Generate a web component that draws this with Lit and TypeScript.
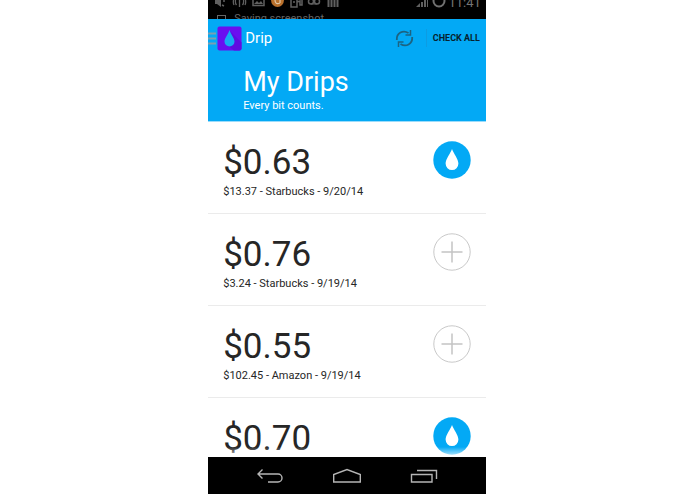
import { LitElement, html, css, svg } from "lit";
import { customElement, property, state } from "lit/decorators.js";

interface Drip {
  amount: string;
  detail: string;
  checked: boolean;
}

const dropPath = "M0 -11C1.6 -6.6 6.4 -0.8 6.4 3.6A6.4 6.4 0 0 1 -6.4 3.6C-6.4 -0.8 -1.6 -6.6 0 -11Z";

@customElement("status-bar")
class StatusBar extends LitElement {
  static styles = css`
    :host {
      display: block;
      flex: none;
      height: 19px;
      overflow: hidden;
      background: #000;
      color: #6a6a6a;
      font-size: 14px;
    }
    .icons {
      display: flex;
      height: 8px;
      align-items: flex-end;
      padding: 0 5px 0 3px;
    }
    svg {
      display: block;
      flex: none;
    }
    .spacer {
      flex: 1;
    }
    .clock {
      line-height: 10px;
      font-size: 13px;
      margin-left: 2px;
      color: #747474;
    }
    .notice {
      display: flex;
      align-items: center;
      gap: 8px;
      padding: 4px 0 0 9px;
      font-size: 11px;
      line-height: 14px;
      color: #666;
    }
    .box {
      width: 9px;
      height: 9px;
      box-sizing: border-box;
      border: 1px solid #666;
    }
  `;

  render() {
    return html`
      <div class="icons">
        <svg width="133" height="8" viewBox="0 0 133 8" fill="none" stroke="#606060" stroke-width="1.5">
          <path d="M4 0V4H6L10 7V0Z" fill="#606060" stroke="none" />
          <path d="M12 1H14M11 5L13 6" />
          <path d="M28.5 0V7M24.500 0Q24 3 25.500 5M32.500 0Q33 3 31.500 5M22.500 0Q22 3 23 5M34.500 0Q35 3 34 5" stroke-width="1.300" />
          <path d="M42 0V5.500H53V0" />
          <path d="M43 4L46 1L48 3L50 1L52 4Z" fill="#606060" stroke="none" />
          <path d="M60 0A6.500 7 0 0 0 73 0Z" fill="#b8702c" stroke="none" />
          <path d="M69 3Q64 5 64 0M69 0V3" stroke="#e0c8a8" stroke-width="1.200" />
          <path d="M80 0V7H86V0M82 2H84M86 2L89 1V5L91 5V0" />
          <path d="M100 4H106" stroke-width="1" />
          <circle cx="100" cy="1.500" r="2.500" />
          <circle cx="106" cy="1.500" r="2.500" />
          <path d="M117.500 0V7M120.500 0V7M123.500 0V7M126.500 0V7" stroke-width="2" />
        </svg>
        <span class="spacer"></span>
        <svg width="31" height="8" viewBox="0 0 31 8">
          <path d="M1 7L5 3V7ZM6 2H8V7H6ZM9 0H11V7H9ZM12 0H13V7H12Z" fill="#606060" />
          <circle cx="24" cy="1" r="5.500" fill="none" stroke="#707070" stroke-width="2" />
        </svg>
        <span class="clock">11:41</span>
      </div>
      <div class="notice"><span class="box"></span><span>Saving screenshot</span></div>
    `;
  }
}

@customElement("drip-header")
class DripHeader extends LitElement {
  static styles = css`
    :host {
      display: block;
      flex: none;
      background: #03a9f5;
      border-bottom: 1px solid #9bdcfb;
      color: #fff;
    }
    .toolbar {
      display: flex;
      align-items: center;
      height: 38px;
      padding-right: 6px;
    }
    button {
      border: 0;
      padding: 0;
      background: none;
      font: inherit;
      color: inherit;
      cursor: pointer;
    }
    svg {
      display: block;
    }
    .home {
      display: flex;
      align-items: center;
      font-size: 15px;
      line-height: 20px;
    }
    .logo {
      margin-right: 3px;
    }
    .spacer {
      flex: 1;
    }
    .rule {
      width: 1px;
      height: 18px;
      margin: 0 6px 0 12px;
      background: #0d9ce2;
    }
    .check-all {
      color: #06222f;
      font-size: 9px;
      line-height: 20px;
      font-weight: 700;
    }
    .heading {
      padding: 9px 35px 7px;
    }
    h1 {
      margin: 0;
      font-size: 27px;
      line-height: 32px;
      font-weight: 400;
    }
    p {
      margin: 0;
      font-size: 11px;
      line-height: 16px;
    }
  `;

  render() {
    return html`
      <div class="toolbar">
        <button class="home" aria-label="Open menu">
          <svg width="9" height="13" viewBox="0 0 9 13"><path d="M0 1.500H8M0 6.500H8M0 11.500H8" stroke="#7d9fb0" stroke-width="2" /></svg>
          <svg class="logo" width="25" height="25" viewBox="0 0 25 25">
            <rect x="0.500" y="0.500" width="24" height="24" rx="2" fill="#6a0ff0" />
            <path d="M13 5L24.500 16.500V22.500Q24.500 24.500 22.500 24.500H17L10 19Z" fill="#600be0" />
            <path d="M12.500 4C13.600 8 17.500 12 17.500 15.500A5 5 0 0 1 7.500 15.500C7.500 12 11.400 8 12.500 4Z" fill="#18a8f5" />
          </svg>
          <span>Drip</span>
        </button>
        <span class="spacer"></span>
        <button aria-label="Refresh">
          <svg width="19" height="19" viewBox="0 0 19 19" fill="none" stroke="#1c6382" stroke-width="1.800">
            <path d="M1.800 11C1.300 4 8 0.500 13.500 4M17.200 8C17.700 15 11 18.500 5.500 15" />
            <path d="M15.500 1V6H10.500M3.500 18V13H8.500" stroke-width="1.500" />
          </svg>
        </button>
        <span class="rule"></span>
        <button class="check-all">CHECK ALL</button>
      </div>
      <div class="heading">
        <h1>My Drips</h1>
        <p>Every bit counts.</p>
      </div>
    `;
  }
}

@customElement("drip-row")
class DripRow extends LitElement {
  @property({ attribute: false }) drip!: Drip;

  static styles = css`
    :host {
      display: flex;
      align-items: flex-start;
      justify-content: space-between;
      box-sizing: border-box;
      height: 92px;
      padding: 19px 15px 0;
      border-bottom: 1px solid #ebebeb;
      color: #262626;
    }
    .amount {
      font-size: 35px;
      line-height: 44px;
    }
    .detail {
      font-size: 11px;
      line-height: 14px;
      white-space: nowrap;
    }
    button {
      flex: none;
      border: 0;
      padding: 0;
      background: none;
      cursor: pointer;
    }
    svg {
      display: block;
    }
  `;

  render() {
    const { amount, detail, checked } = this.drip;
    return html`
      <div>
        <div class="amount">${amount}</div>
        <div class="detail">${detail}</div>
      </div>
      <button aria-label=${checked ? "Saved" : "Add"} aria-pressed=${checked}>
        <svg width="38" height="38" viewBox="-19 -19 38 38">
          ${checked
            ? svg`<circle r="18.700" fill="#03a9f5" /><path d=${dropPath} fill="#fff" />`
            : svg`<circle r="18.200" fill="#fff" stroke="#c9c9c9" /><path d="M-10.500 0H10.500M0 -10.500V10.500" stroke="#c4c4c4" stroke-width="1.500" />`}
        </svg>
      </button>
    `;
  }
}

@customElement("nav-bar")
class NavBar extends LitElement {
  static styles = css`
    :host {
      display: flex;
      flex: none;
      height: 37px;
      padding: 0 23px;
      background: #000;
    }
    button {
      flex: 1;
      display: flex;
      align-items: center;
      justify-content: center;
      border: 0;
      padding: 0;
      background: none;
      cursor: pointer;
    }
    svg {
      display: block;
      fill: none;
      stroke: #b5b5b5;
      stroke-width: 1.4;
    }
  `;

  render() {
    return html`
      <button aria-label="Back">
        <svg width="28" height="16" viewBox="0 0 28 16"><path d="M6.500 1.500L2 6L6.500 10.500M2 6H22A4 4 0 0 1 22 14H12" /></svg>
      </button>
      <button aria-label="Home">
        <svg width="28" height="16" viewBox="0 0 28 16"><path d="M0.700 14V6.500L14 1.500L27.300 6.500V14Z" /></svg>
      </button>
      <button aria-label="Recent apps">
        <svg width="28" height="16" viewBox="0 0 28 16"><path d="M1.500 6.500H22V14H1.500ZM7 2.500H26.500V11" /></svg>
      </button>
    `;
  }
}

@customElement("app-root")
class AppRoot extends LitElement {
  @state() private drips: Drip[] = [
    { amount: "$0.63", detail: "$13.37 - Starbucks - 9/20/14", checked: true },
    { amount: "$0.76", detail: "$3.24 - Starbucks - 9/19/14", checked: false },
    { amount: "$0.55", detail: "$102.45 - Amazon - 9/19/14", checked: false },
    { amount: "$0.70", detail: "", checked: true },
  ];

  static styles = css`
    :host {
      display: flex;
      justify-content: center;
      box-sizing: border-box;
      height: 100vh;
      padding-right: 1px;
      background: #fff;
      font-family: Roboto, "Liberation Sans", sans-serif;
    }
    .phone {
      display: flex;
      flex-direction: column;
      width: 40%;
      min-width: 270px;
    }
    .list {
      position: relative;
      flex: 1;
      min-height: 0;
      overflow: hidden;
    }
    .list::after {
      content: "";
      position: absolute;
      inset: auto 0 0 0;
      height: 10px;
      background: linear-gradient(rgb(255 255 255 / 0), rgb(255 255 255 / 0.8));
    }
  `;

  render() {
    return html`
      <div class="phone">
        <status-bar></status-bar>
        <drip-header></drip-header>
        <main class="list">
          ${this.drips.map((drip) => html`<drip-row .drip=${drip}></drip-row>`)}
        </main>
        <nav-bar></nav-bar>
      </div>
    `;
  }
}
